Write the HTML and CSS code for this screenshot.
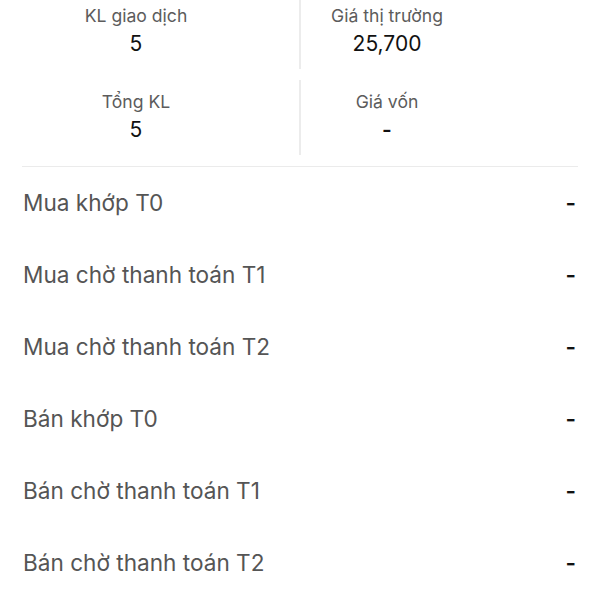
FILE: index.html
```html
<!DOCTYPE html>
<html lang="vi">
<head>
<meta charset="utf-8">
<link rel="stylesheet" href="styles.css">
</head>
<body>
<div class="page">
  <div class="stats">
    <div class="stat-row">
      <div class="cell cell-left">
        <div class="label">KL giao dịch</div>
        <div class="value">5</div>
      </div>
      <div class="vline"></div>
      <div class="cell cell-right">
        <div class="label">Giá thị trường</div>
        <div class="value">25,700</div>
      </div>
    </div>
    <div class="stat-row">
      <div class="cell cell-left">
        <div class="label">Tổng KL</div>
        <div class="value">5</div>
      </div>
      <div class="vline"></div>
      <div class="cell cell-right">
        <div class="label">Giá vốn</div>
        <div class="value value-dash">-</div>
      </div>
    </div>
  </div>
  <div class="hline"></div>
  <div class="list">
    <div class="row"><span class="row-label">Mua khớp T0</span><span class="row-value">-</span></div>
    <div class="row"><span class="row-label">Mua chờ thanh toán T1</span><span class="row-value">-</span></div>
    <div class="row"><span class="row-label">Mua chờ thanh toán T2</span><span class="row-value">-</span></div>
    <div class="row"><span class="row-label">Bán khớp T0</span><span class="row-value">-</span></div>
    <div class="row"><span class="row-label">Bán chờ thanh toán T1</span><span class="row-value">-</span></div>
    <div class="row"><span class="row-label">Bán chờ thanh toán T2</span><span class="row-value">-</span></div>
  </div>
</div>
</body>
</html>
```
FILE: styles.css
```css
html, body {
  margin: 0;
  padding: 0;
  background: #ffffff;
}
body {
  font-family: Inter, "Noto Sans", "Liberation Sans", sans-serif;
  overflow: hidden;
}
.page {
  width: 600px;
  height: 600px;
  overflow: hidden;
}
.stats {
  margin-top: -6px;
  display: flex;
  flex-direction: column;
  gap: 11px;
}
.stat-row {
  display: flex;
  height: 75px;
}
.cell {
  display: flex;
  flex-direction: column;
  align-items: center;
  padding-top: 11px;
}
.cell-left {
  width: 272px;
}
.vline {
  margin-left: 27px;
  width: 2px;
  background: #ececec;
}
.cell-right {
  width: 172px;
}
.label {
  font-size: 17.6px;
  line-height: 22px;
  color: #5c5c5c;
}
.value {
  margin-top: 4px;
  font-size: 21px;
  line-height: 26px;
  color: #111111;
}
.value-dash {
  font-weight: 600;
}
.hline {
  margin: 11px 22px 0;
  height: 1px;
  background: #ebebeb;
}
.list {
  display: flex;
  flex-direction: column;
}
.row {
  height: 72px;
  display: flex;
  align-items: center;
  justify-content: space-between;
  padding: 0 24px 0 23px;
}
.row-label {
  font-size: 22.6px;
  line-height: 28px;
  color: #555555;
}
.row-value {
  font-size: 22.6px;
  line-height: 28px;
  font-weight: 600;
  color: #111111;
}
```
